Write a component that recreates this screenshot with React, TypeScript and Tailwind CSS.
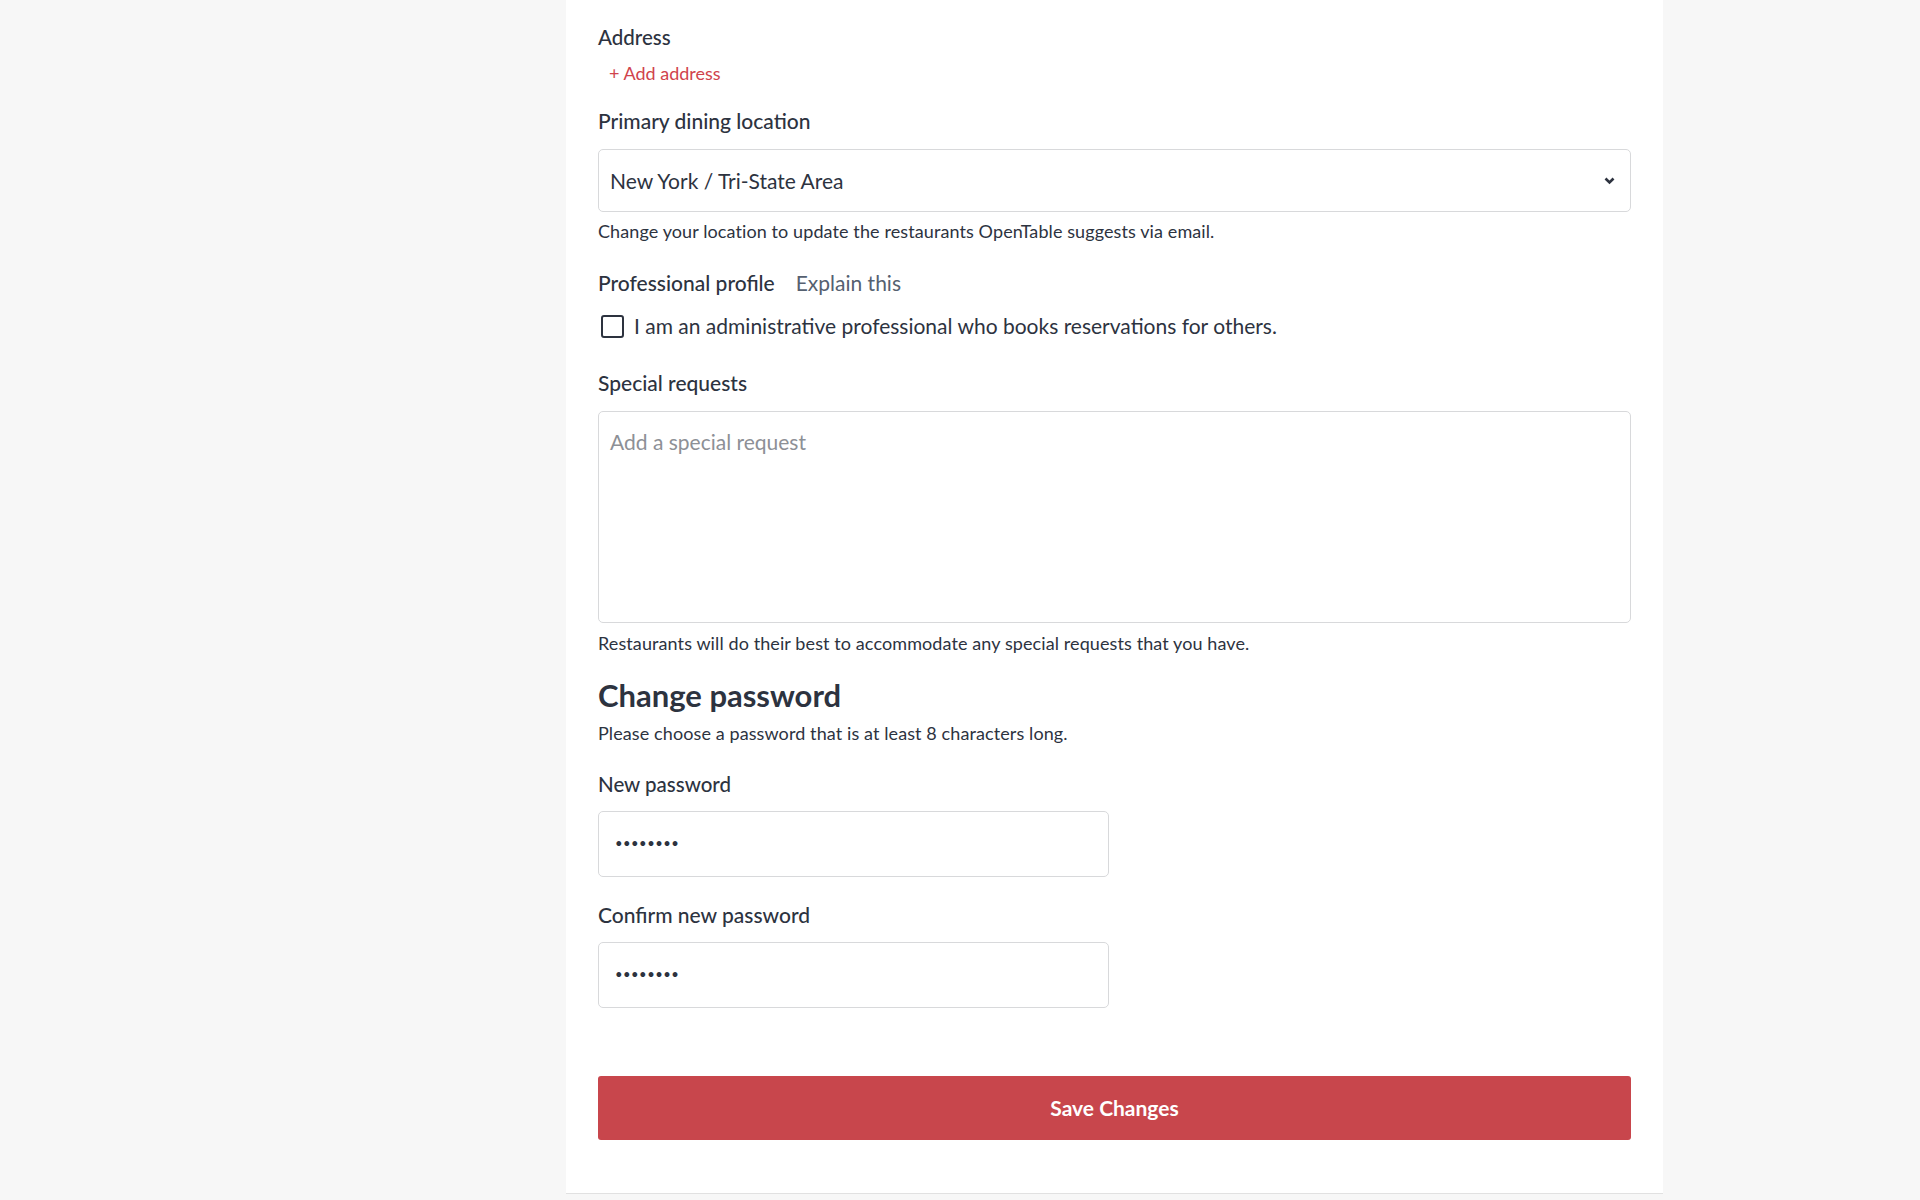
export default function App() {
    return (
        <div className="flex min-h-[1200px] w-full bg-[#f7f7f7] text-[#2d333f] font-['Lato','Noto_Sans',sans-serif]">
            {/* Left gutter (sidebar scrolled out of view) */}
            <div className="w-[566px] shrink-0"></div>

            {/* Settings card */}
            <div className="w-[1097px] shrink-0">
                <div className="border-b border-[#e1e1e1] bg-white px-[32px] pt-[25px] pb-[53px]">
                    {/* Address */}
                    <div className="text-[20.5px] leading-[24px] font-medium">Address</div>
                    <button className="mt-[12px] block pl-[11px] text-[18px] leading-[24px] text-[#d0434c]">+ Add address</button>

                    {/* Primary dining location */}
                    <div className="mt-[24px] text-[21px] leading-[24px] font-medium">Primary dining location</div>
                    <div className="mt-[16px] flex h-[63px] items-center justify-between rounded-[5px] border border-[#d8d9db] pl-[11px] pr-[15px]">
                        <span className="text-[21px]">New York / Tri-State Area</span>
                        <svg width="11" height="8" viewBox="0 0 11 8" fill="none">
                            <path d="M1.5 1.5L5.5 5.5L9.5 1.5" stroke="#2d333f" strokeWidth="2.6" />
                        </svg>
                    </div>
                    <p className="mt-[8px] text-[18px] leading-[22px] tracking-[0.1px]">
                        Change your location to update the restaurants OpenTable suggests via email.
                    </p>

                    {/* Professional profile */}
                    <div className="mt-[29px] flex items-center gap-[21px] text-[21px] leading-[24px]">
                        <span className="font-medium">Professional profile</span>
                        <span className="text-[#556070]">Explain this</span>
                    </div>
                    <label className="mt-[17px] flex h-[28px] items-center gap-[10px]">
                        <span className="ml-[3px] size-[23px] rounded-[3px] border-[2.5px] border-[#2d333f]"></span>
                        <span className="text-[21px]">I am an administrative professional who books reservations for others.</span>
                    </label>

                    {/* Special requests */}
                    <div className="mt-[31px] text-[21px] leading-[24px] font-medium">Special requests</div>
                    <textarea
                        readOnly
                        placeholder="Add a special request"
                        className="mt-[16px] block h-[212px] w-full resize-none rounded-[5px] border border-[#d8d9db] px-[11px] pt-[17px] text-[21px] leading-[26px] outline-none placeholder:text-[#8d9096]"
                    ></textarea>
                    <p className="mt-[9px] text-[18px] leading-[22px] tracking-[0.1px]">
                        Restaurants will do their best to accommodate any special requests that you have.
                    </p>

                    {/* Change password */}
                    <h2 className="mt-[23px] text-[31px] leading-[36px] font-bold">Change password</h2>
                    <p className="mt-[9px] text-[18px] leading-[22px] tracking-[0.1px]">Please choose a password that is at least 8 characters long.</p>

                    <div className="mt-[28px] text-[20.5px] leading-[24px] font-medium">New password</div>
                    <div className="mt-[15px] flex h-[66px] w-[511px] items-center rounded-[5px] border border-[#d8d9db] pl-[16px]">
                        <span className="text-[13px] tracking-[0.5px]">••••••••</span>
                    </div>

                    <div className="mt-[26px] text-[21px] leading-[24px] font-medium">Confirm new password</div>
                    <div className="mt-[15px] flex h-[66px] w-[511px] items-center rounded-[5px] border border-[#d8d9db] pl-[16px]">
                        <span className="text-[13px] tracking-[0.5px]">••••••••</span>
                    </div>

                    {/* Save */}
                    <button className="mt-[68px] flex h-[64px] w-full items-center justify-center rounded-[3px] bg-[#c8464c] text-[21px] font-bold text-white">
                        Save Changes
                    </button>
                </div>
            </div>
        </div>
    );
}
